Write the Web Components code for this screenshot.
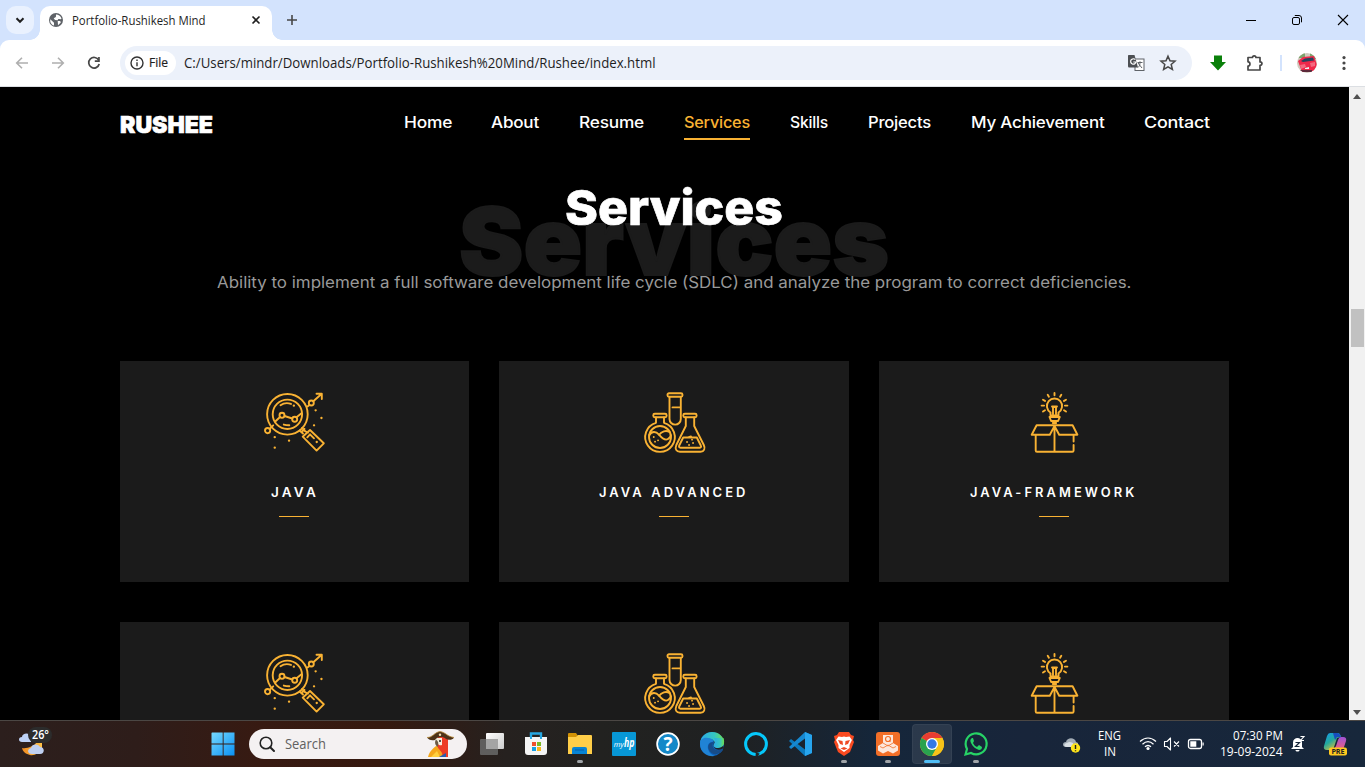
<!DOCTYPE html>
<html lang="en">
<head>
<meta charset="utf-8">
<title>Portfolio-Rushikesh Mind</title>
<style>
html,body{margin:0;height:100%;overflow:hidden;background:#000}
body{font-family:Inter,"Open Sans",sans-serif}
</style>
</head>
<body>
<desktop-screen></desktop-screen>
<script>
const define=(name,html,init)=>customElements.define(name,class extends HTMLElement{
  constructor(){super();this.attachShadow({mode:'open'}).innerHTML=typeof html==='function'?html(this):html}
  connectedCallback(){if(init)init(this)}
});

/* A line of text stretched or condensed to the width given in "w". */
define('fit-text','<style>:host{display:block;white-space:nowrap;flex:none}span{display:inline-block;transform-origin:0 50%}</style><span><slot></slot></span>',el=>{
  const w=+el.getAttribute('w'),s=el.shadowRoot.querySelector('span');
  el.style.width=w+'px';
  const n=s.getBoundingClientRect().width;
  if(n)s.style.transform='scaleX('+w/n+')';
});

const G='fill="none" stroke="#f9b233" stroke-width="1.9" stroke-linecap="round" stroke-linejoin="round"';
const ICONS={
chev:[16,16,'<path d="M4.5 6.3 8 9.8l3.5-3.5" fill="none" stroke="#1f1f1f" stroke-width="2"/>'],
globe:[16,16,'<circle cx="8" cy="8" r="7" fill="#5f6368"/><path d="M2.3 7.2 6 10.7v2.8c-2.6-.6-4.2-3.300-3.700-6.300zM8 2.400c2.200 0 4.700 1.500 5.500 4-.2.900-1.200.900-2 .6-.9-.3-1.700.3-1.700 1.200l-2.800-.1-1.300-1.800 2.200-1.300zM9.700 9h2.500l.6 1.500-2.800 2.700z" fill="#fff"/>'],
close:[12,12,'<path d="m2.500 2.500 7 7m0-7-7 7" stroke="#1f1f1f" stroke-width="1.6"/>'],
plus:[14,14,'<path d="M7 2v10M2 7h10" stroke="#474747" stroke-width="1.600"/>'],
min:[12,12,'<path d="M1 6.500h10" stroke="#000"/>'],
restore:[12,12,'<rect x="1.500" y="3.500" width="7" height="7" rx="1.500" fill="none" stroke="#000"/><path d="M3.800 1.500H8a2.500 2.500 0 0 1 2.500 2.500v4.300" fill="none" stroke="#000"/>'],
x:[12,12,'<path d="m1 1 10 10m0-10L1 11" stroke="#000" stroke-width="1.100"/>'],
back:[16,16,'<path d="M14 8H3m5-5.300L2.700 8 8 13.300" fill="none" stroke="#afafaf" stroke-width="1.600"/>'],
fwd:[16,16,'<path d="M2 8h11M8 2.700 13.300 8 8 13.300" fill="none" stroke="#afafaf" stroke-width="1.600"/>'],
reload:[16,16,'<path d="M12.700 5.200A5.300 5.300 0 1 0 13.200 9" fill="none" stroke="#474747" stroke-width="1.700"/><path d="M13.800 2v5h-5V5.300h3.300V2z" fill="#474747"/>'],
info:[14,14,'<circle cx="7" cy="7" r="6" fill="none" stroke="#333" stroke-width="1.400"/><path d="M7 6.200v4M7 3.600v1.400" stroke="#333" stroke-width="1.400"/>'],
translate:[18,18,'<rect x="8" y="5" width="9" height="11.500" fill="#fff" stroke="#5f6368"/><path d="M2 1h5.500l3.500 12.500H2.500C1.500 13.500 1 13 1 12V2c0-.6.4-1 1-1z" fill="#4c4f53"/><path d="M8.300 5.600A2.700 2.700 0 1 0 9 8H6.300" fill="none" stroke="#fff" stroke-width="1.200"/><path d="M10.500 8.500h5M13 7.300v1.200c0 3-1 4-2 5m0-4.500 4 5" fill="none" stroke="#5f6368"/>'],
star:[18,18,'<path d="m9 2.200 2 4.600 5 .4-3.800 3.300 1.200 4.900L9 12.800l-4.400 2.600 1.200-4.900L2 7.200l5-.4z" fill="none" stroke="#474747" stroke-width="1.500"/>'],
down:[18,18,'<path d="M5 1.500h8V8h4l-8 8.500L1 8h4z" fill="#0a800a"/>'],
puzzle:[18,18,'<path d="M2 3.500h4.500c0-2.200 3.400-2.200 3.400 0H14v4.400c2.600 0 2.600 3.400 0 3.400V16H2v-4c2.600-.2 2.600-4 0-4.200z" fill="none" stroke="#474747" stroke-width="1.700" stroke-linejoin="round"/>'],
avatar:[20,20,'<defs><clipPath id="c"><circle cx="10" cy="10" r="10"/></clipPath></defs><g clip-path="url(#c)"><path fill="#cfc8bc" d="M0 0h20v20H0z"/><path fill="#7ca36d" d="M0 0h8v5H0zM13 0h7v6h-7z"/><path fill="#f0284a" d="m1 8 5-4 11-1 3 9-3 6-12 1z"/><path fill="#28425d" d="m4 8 4-2.500 8-1 1 3-11 1.500z"/><path fill="#f46a80" d="m3 12 5-1 1 3-5 2zM13 10l5-1v4l-4 1z"/><path fill="#5c2a3b" d="M2 17h13v2H4z"/><path fill="#eee" d="m8 15 4-1v2H8z"/></g>'],
dots:[16,16,'<g fill="#474747"><circle cx="8" cy="2.600" r="1.600"/><circle cx="8" cy="8" r="1.600"/><circle cx="8" cy="13.400" r="1.600"/></g>'],
lens:[62,62,`<g ${G}><circle cx="23.400" cy="22.300" r="20.300"/><circle cx="23.400" cy="22.300" r="14.700"/><path d="M43.500 14.500 45.500 13M49.300 9.200 57.500 2M52.500 1.800h5.300v5.200M5.700 36.800l3.500-3.500M38 36l3 3M35.500 38.500l3.500 3M37.500 39.800l3-3M46 38 59.800 51.300 52.600 58.600 38.700 44.700zM39.500 38.500l4.500 2M43.300 45.300 46 42.300l4 4M11.500 29.300 16 25M20.500 24l7.800 2.500M32.500 25.300l5-4M16.500 13.300c3-2.200 7-2.700 10.500-1.400M19.800 32.600c2 .7 3.500.7 5.500.7"/><circle cx="47.300" cy="11" r="2.500"/><circle cx="3.600" cy="38.600" r="2.600"/><circle cx="18" cy="23.300" r="2.500"/><circle cx="30.700" cy="27.300" r="2.500"/></g><path d="M51.600 18.300h.1M57.400 26h.1M50 33.300h.1M10.700 45.200h.1M25 48.700h.1M10.700 55.700h.1M52.700 50h.1M29.800 13.700h.1" stroke="#f9b233" stroke-width="2.300" stroke-linecap="round"/>`],
flasks:[62,62,`<g ${G}><rect x="23.500" y="1.200" width="15" height="3.600" rx="1.500"/><path d="M25.500 5v22a5.600 5.600 0 0 0 11.300 0V5M28.500 15.400h8"/><rect x="9.300" y="21.700" width="13.300" height="3.600" rx="1.500"/><path d="M12 25.500v5.300a14.800 14.800 0 1 0 8 0v-5.300"/><circle cx="16" cy="45" r="11"/><path d="M5.300 43c2.500-4 6.500-4 9.700-.4 3 3.600 6 6.400 9 4.400 1.500-1 2.500-2.300 2.900-3.500M15 43c2.500-3.700 7-5 10.500-3"/><rect x="39.300" y="21.700" width="13.300" height="3.600" rx="1.500"/><path d="M41.800 25.500v8.500l-9.500 19c-1.600 4 0 6.800 3.700 6.800h20.500c3.700 0 5-3.300 3.300-6.800l-9.600-19v-8.500"/><path d="m39.200 45.500-4 8c-.5 1.300 0 2.200 1.300 2.200h19.300c1.300 0 1.600-1.200 1-2.200l-4-8zM44 45.500l3-1"/></g><path d="M9.700 45h.1M11 49.700h.1M14 48.300h.1M43 50h.1M49 51h.1M45 53h.1M48 47.700h.1" stroke="#f9b233" stroke-width="1.800" stroke-linecap="round"/>`],
box:[62,62,`<g ${G}><path d="M26.500 20.500a7.600 7.600 0 1 1 8 0v3h-8zM25.500 25h10.300l-1.700 4h-7zM28.800 31h3.400M29 22v-7h3v7M28 14.500h5M30.500 1v2.300M23.700 2.800l1.200 2M37.300 2.800l-1.200 2M19 7.700l2 1.200M42 7.700l-2 1.200M17.600 13.600h2.500M40.900 13.600h2.500M19 19.500l2-1.200M42 19.500l-2-1.200M12.600 33.300h36l4.800 9.400H35.200L30.500 34l-4.700 8.700H7.700zM11.700 43v15.500c0 .8.500 1.300 1.300 1.300h35.300c.9 0 1.300-.5 1.300-1.300V53M49.600 43v6.500M30.500 34v25.500"/></g>`],
weather:[32,30,'<defs><linearGradient id="m"><stop stop-color="#f08a20"/><stop offset="1" stop-color="#ffc347"/></linearGradient></defs><path d="M3 18c5 1 12-2 14-5h6v5c-2 5-8 8-12 7-4-1-7-3-8-7z" fill="url(#m)"/><path d="M3 12c-4 0-4-5 0-5 0-4 8-5 9 0v5z" fill="#bdd1f6"/><path d="M13 24c-5 0-5-5-1-6 1-5 8-4 9-1 5 0 5 7 0 7z" fill="#bfd0f1"/>'],
win:[24,24,'<defs><linearGradient id="w" x2="1" y2="1"><stop stop-color="#76d9ff"/><stop offset="1" stop-color="#0a91f4"/></linearGradient></defs><path d="M1 .5h10.700v11H.5V1zM12.600.5h10.900v11H12.600zM.5 12.500h11.200v11H.5zM12.600 12.500h10.900v11H12.600z" fill="url(#w)"/>'],
search:[18,18,'<circle cx="8" cy="8" r="5.800" fill="none" stroke="#222" stroke-width="1.600"/><path d="m12.200 12.200 3.800 3.800" stroke="#222" stroke-width="2" stroke-linecap="round"/>'],
parrot:[30,28,'<path d="M2 27c2-7 6-9 8-11l6 1 5 10z" fill="#f5a71b"/><path d="M11 8c3-3 9-3 11 1v18h-6c2-6-4-6-5-12z" fill="#ed3c25"/><path d="m5 27 6-6 3 6z" fill="#ffd03d"/><path d="m13 27 7-4v4z" fill="#285fae"/><path d="M10 8h6v7c-3 1-6-1-6-7z" fill="#f5eedc"/><path d="M10 9.500c-2 3-.5 6 1.500 7.500 1.500-3 1-6-1.500-7.500z" fill="#6b5a45"/><circle cx="14" cy="11" r="1" fill="#222"/><path d="M1 7.500c6 0 7-5 13-6 6 1 7 5 14 6-2 3.300-6 2.500-8 1.500-3-3-9-2.500-11 1-4 1-6.500-.5-8-2.500z" fill="#4c3218"/><path d="M1 7.500c6 0 7-5 13-6 6 1 7 5 14 6" fill="none" stroke="#b88a37" stroke-width=".8"/><circle cx="14" cy="4.800" r="1.200" fill="#f0dfaf"/>'],
task:[26,24,'<defs><linearGradient id="t" x2="1" y2="1"><stop stop-color="#fff"/><stop offset="1" stop-color="#ccc"/></linearGradient></defs><rect x="7" y="1" width="18" height="16" rx="1" fill="url(#t)"/><rect x="1" y="7" width="18" height="16" rx="1" fill="#666" opacity=".88"/><path d="M7 7h12v10H7z" fill="#a4a4a4"/>'],
store:[24,24,'<path d="M7 7V1.500h10V7" fill="none" stroke="#27a7e1" stroke-width="2.400"/><path d="M1 5h22v15q0 3-3 3H4q-3 0-3-3z" fill="#f5f5f5"/><path d="M7 5v2m10-2v2" stroke="#27a7e1" stroke-width="2"/><path fill="#ee4e2e" d="M8 10h4v4H8z"/><path fill="#7ab927" d="M13 10h4v4h-4z"/><path fill="#159ee5" d="M8 15h4v4H8z"/><path fill="#f9b71b" d="M13 15h4v4h-4z"/>'],
folder:[26,24,'<path d="M1 2q0-1 1-1h7l2 3v5H1z" fill="#d29205"/><path d="M1 5h8l2-2h13q1 0 1 1v18H1z" fill="#ffce48"/><path d="M5 22v-5q0-2 2-2h11q2 0 2 2v5z" fill="#0784d4"/><path d="M8 18h9" stroke="#075ea8"/>'],
myhp:[24,24,'<rect width="24" height="24" rx="1" fill="#0797d6"/><text x="1.700" y="15" font-family="Open Sans" font-style="italic" font-size="8" fill="#fff" textLength="10" lengthAdjust="spacingAndGlyphs">my</text><text x="12" y="15" font-family="Open Sans" font-weight="700" font-style="italic" font-size="12" fill="#fff" textLength="10.500" lengthAdjust="spacingAndGlyphs">hp</text>'],
help:[24,24,'<circle cx="12" cy="12" r="10.900" fill="#1488c8" stroke="#fff" stroke-width="1.700"/><text x="12" y="18.800" text-anchor="middle" font-family="Open Sans" font-weight="700" font-size="19" fill="#fff">?</text>'],
edge:[24,24,'<defs><linearGradient id="e"><stop stop-color="#2caae7"/><stop offset=".6" stop-color="#35c6c1"/><stop offset="1" stop-color="#70df4d"/></linearGradient></defs><circle cx="12" cy="12" r="12" fill="#0c62bd"/><path d="M0 11C1 4 6 0 12 0c7 0 12 5 12 10 0 4-3 6-6 6-4 0-5-2-4-4 1-3-1-5-4-5C5 6 1 8 0 11z" fill="url(#e)"/><path d="M0 12c0-5 4-7 8-6 3 0 5 1 6 4-4-1-7 2-6 7 1 4 4 6 7 7C7 25 0 20 0 12z" fill="#2083d5"/><path d="M13.500 10c-2 3-1 7 3 8 3 .6 5-.5 6-1l.5 1c-3 5-11 6-14 0-2-4 0-8 4.500-8z" fill="#174c88"/><path d="M13.500 12c1-2 0-3-1-3.500L24 15l-1 1.500c-6 3-10 0-9.500-4.500z" fill="#202226"/><path d="M14 6h9.500c2 6-1 10-5.500 10-4 0-5-2-4-4 1-2 1-4 0-6z" fill="url(#e)"/>'],
alexa:[24,24,'<circle cx="12" cy="12" r="10.400" fill="none" stroke="#05c8fb" stroke-width="3"/><path d="m11.500 25 .3-5 4 1.800-3 3.200z" fill="#222426"/>'],
code:[24,24,'<path d="m17 0 7 3v18l-7 3L1 9l2-2 14 10.500z" fill="#0c79bc"/><path d="m17 0 7 3v18l-7 3z" fill="#27a5ee"/><path d="M17 0v6.500L3 17l-2-2z" fill="#1688d0"/>'],
brave:[24,24,'<path d="M7 0h10l2 3 3 1-1 4 1 2-4 10-6 4-6-4L2 10l1-2-1-4 3-1z" fill="#fa4a20"/><path d="m6.500 4.500 3.500.5 2-.5 2 .5 3.500-.5L20 8l-2.500 5v3L12 20l-5.500-4v-3L4 8z" fill="#fff"/><path d="m6 8 4.500 1 .5 4-3-1zM18 8l-4.500 1-.5 4 3-1zM8.500 16.500l3.500-1.500 3.500 1.500L12 18z" fill="#f04a25"/>'],
qube:[24,24,'<rect width="24" height="24" rx="3" fill="#f26f28"/><path d="M7 3h10v8l-5 3-5-3zM2 14l5-3 5 3v5l-5 2.500-5-3zM12 14l5-3 5 3v4.500l-5 3-5-2.500z" fill="#fce8dd"/><circle cx="12" cy="7" r="2.500" fill="none" stroke="#f26f28" stroke-width="1.200"/><path d="m13 8 1.500 1.700M4 14.500l3 1.500 5-3 5 3 3-1.500M7 11l5 3 5-3" fill="none" stroke="#f26f28" stroke-width=".8"/>'],
chrome:[24,24,'<circle cx="12" cy="12" r="12" fill="#f8c318"/><path d="M12 12 1.600 6A12 12 0 0 1 22.400 6z" fill="#e83c32"/><path d="M1.600 6A12 12 0 0 0 12 24l5-9-5-3z" fill="#29a24f"/><path d="M12 6h10.400A12 12 0 0 1 12 24l5.200-9z" fill="#f8c318"/><circle cx="12" cy="12" r="6" fill="#fff"/><circle cx="12" cy="12" r="4.700" fill="#3478e5"/>'],
whats:[24,24,'<path d="M1.500 22.500 3 17A10.500 10.500 0 1 1 7 21z" fill="none" stroke="#27d366" stroke-width="2.200"/><path d="M8 6C6 7 6 9 7 11c2 4 5 6 8 7 2 0 3-1 3-3l-3-2-2 2c-2-1-3-2-4-4l1-2-1-3z" fill="#27d366"/>'],
cloud:[20,18,'<path d="M4 12C0 12 0 7 4 7c1-5 9-5 10 0l2 1v4z" fill="#a3adb6"/><path d="M5 12c-4 0-3-4 0-4 3-2 5 0 6 0v4z" fill="#d9dfe4"/><circle cx="13.500" cy="13" r="4.700" fill="#ffe51a"/><path d="M13.500 10v4m0 1.200v1" stroke="#222" stroke-width="1.400"/>'],
wifi:[18,16,'<g fill="none" stroke="#fff" stroke-width="1.300"><path d="M1 5.500c5-4.500 11-4.500 16 0M3.500 8.200c3.500-3.200 7.500-3.200 11 0M6 10.800c2-1.800 4-1.800 6 0"/></g><circle cx="9" cy="12.500" r="1.600" fill="#fff"/>'],
mute:[18,16,'<path d="M1.500 5.500H4L7.500 2v12L4 10.500H1.500zM11 5.500l5 5m0-5-5 5" fill="none" stroke="#fff" stroke-width="1.100" stroke-linejoin="round"/>'],
battery:[18,16,'<rect x="1.500" y="3.500" width="13" height="9" rx="2" fill="none" stroke="#fff" stroke-width="1.300"/><path d="M3.300 5.300h6v5.400h-6zM15.500 6.500h1.200v3h-1.200z" fill="#fff"/>'],
bell:[16,18,'<path d="M3 12V7.500c0-6 9-6 9 0V12l2 2H1zM5.500 15h4c0 2-4 2-4 0z" fill="#fff"/><path d="M5.500 7.500h4l-4 4h4" fill="none" stroke="#17263a" stroke-width="1.200"/><path d="M10.500 1.500H14l-3.500 4H14" fill="none" stroke="#fff" stroke-width="1.100"/>'],
copilot:[26,26,'<defs><linearGradient id="p" x2=".7" y2="1"><stop stop-color="#1599f2"/><stop offset=".5" stop-color="#23a99d"/><stop offset="1" stop-color="#f2c52d"/></linearGradient><linearGradient id="q" x2="0" y2="1"><stop stop-color="#a052d7"/><stop offset="1" stop-color="#ef6278"/></linearGradient></defs><path d="M7 2h8q2 0 3 4l-4 1-3 9q-1 3-4 3H4q-4 0-3-4L4 5q1-3 3-3z" fill="url(#p)"/><path d="M18 6h2q4 0 3 4l-3 9H9q3-1 4-4l2-6q1-3 3-3z" fill="url(#q)"/><path d="M14 2q3 0 4 4h-4l-2 3-2-7z" fill="#174dbe"/><rect x="6" y="16.500" width="18" height="8" rx="2" fill="#ffc91f"/><text x="8.500" y="23.100" font-family="Open Sans" font-weight="700" font-size="7.200" fill="#222" textLength="13">PRE</text>']
};
define('ui-icon',el=>{
  const [w,h,p]=ICONS[el.getAttribute('name')];
  return `<style>:host{display:block;flex:none;width:${w}px;height:${h}px}svg{display:block;overflow:visible}</style><svg width="${w}" height="${h}" viewBox="0 0 ${w} ${h}">${p}</svg>`;
});
/* Centres its content in a cell of the given width. */
define('icon-cell','<style>:host{display:flex;align-items:center;justify-content:center;flex:none}</style><slot></slot>',el=>{el.style.width=el.getAttribute('w')+'px'});
const ic=(n,w)=>`<icon-cell w="${w}"><ui-icon name="${n}"></ui-icon></icon-cell>`;

define('tab-strip',`<style>
:host{display:flex;height:40px;background:#d3e3fd;font:12px/28px "Open Sans",sans-serif;color:#1f1f1f;align-items:center;flex:none}
.list{width:28px;height:28px;border-radius:10px;background:#e9f1fe;margin-left:6px;display:grid;place-items:center}
.tab{margin:6px 0 0 6px;width:232px;height:34px;background:#fff;border-radius:10px 10px 0 0;display:flex;align-items:center;position:relative;box-sizing:border-box;padding:0 10px 6px 8px}
.tab:before,.tab:after{content:"";position:absolute;bottom:0;width:10px;height:10px}
.tab:before{left:-10px;background:radial-gradient(circle at 0 0,transparent 9.500px,#fff 10px)}
.tab:after{right:-10px;background:radial-gradient(circle at 100% 0,transparent 9.500px,#fff 10px)}
fit-text{margin:1px 0 0 8px}.tab ui-icon:last-child{margin-left:auto}
.new{margin-left:13px}.sp{flex:1}
</style><div class="list"><ui-icon name="chev"></ui-icon></div>
<div class="tab"><ui-icon name="globe"></ui-icon><fit-text w="133.500">Portfolio-Rushikesh Mind</fit-text><ui-icon name="close"></ui-icon></div>
<ui-icon class="new" name="plus"></ui-icon><div class="sp"></div>${ic('min',46)}${ic('restore',46)}${ic('x',45)}`);

define('address-bar',`<style>
:host{display:block;background:#d3e3fd;flex:none}
.bar{height:46px;border-bottom:1px solid #dcdfe3;background:#fff;border-radius:9px 9px 0 0;display:flex;align-items:center;padding-left:4px;font:14px/24px "Open Sans",sans-serif;color:#1f1f1f}
.omni{width:1072px;height:34px;border-radius:17px;background:#ecf1fa;display:flex;align-items:center;margin-left:8px;box-sizing:border-box;padding:0 8px 0 5px}
.chip{height:24px;width:51px;border-radius:12px;background:#fff;display:flex;align-items:center;font-size:12px;font-weight:500;gap:5px;padding-left:5px;box-sizing:border-box;-webkit-text-stroke:.2px}
.url{margin-left:8px}.sp{flex:1}.div{width:2px;height:16px;background:#d3e3fd;margin:0 7px}
</style><div class="bar">${ic('back',36)}${ic('fwd',36)}${ic('reload',36)}
<div class="omni"><div class="chip"><ui-icon name="info"></ui-icon><fit-text w="19">File</fit-text></div>
<fit-text class="url" w="471.500">C:/Users/mindr/Downloads/Portfolio-Rushikesh%20Mind/Rushee/index.html</fit-text><div class="sp"></div>${ic('translate',32)}${ic('star',32)}</div>
<icon-cell w="8"></icon-cell>${ic('down',36)}${ic('puzzle',37)}<div class="div"></div>${ic('avatar',36)}${ic('dots',38)}</div>`);

define('nav-item','<style>:host{display:block;height:34px;color:#fff;border-bottom:2px solid transparent;box-sizing:border-box;font:500 15.500px/34px Inter}:host([active]){color:#f9b233;border-color:#f9b233}</style><slot></slot>');
const NAV=[['Home',48.1],['About',48],['Resume',65],['Services',66],['Skills',38],['Projects',63],['My Achievement',133.5],['Contact',66]];
define('site-nav',`<style>:host{display:flex;justify-content:space-between;padding:19px 19px 0 0;height:34px}
.brand{font:900 23.300px/37px Inter;color:#fff;-webkit-text-stroke:.6px #fff}nav{display:flex;gap:39.850px;letter-spacing:-.2px}</style>
<fit-text class="brand" w="93">RUSHEE</fit-text><nav>${NAV.map(([t,w])=>`<nav-item${t=='Services'?' active':''}><fit-text w="${w}">${t}</fit-text></nav-item>`).join('')}</nav>`);

define('section-title',`<style>:host{display:block;position:relative;margin-top:38px;height:138px;color:#fff}
.main{position:relative;margin:0 auto;left:-.5px;font:800 48.500px/60px Inter;-webkit-text-stroke:.7px #fff}.ghost{position:absolute;left:339px;top:3px;font:900 93.500px/120px Inter;color:#1b1b1b;-webkit-text-stroke:2px #1b1b1b}
.sub{position:relative;margin:30px auto 0;font:400 15.800px/30px Inter;color:#999}</style>
<fit-text class="ghost" w="430">Services</fit-text><fit-text class="main" w="218">Services</fit-text>
<fit-text class="sub" w="914.500">Ability to implement a full software development life cycle (SDLC) and analyze the program to correct deficiencies.</fit-text>`);

define('service-card',`<style>:host{display:flex;flex-direction:column;align-items:center;background:#1b1b1b;height:221px;box-sizing:border-box;padding-top:31px}
::slotted(ui-icon){margin-left:1.500px}
.t{font:600 12.600px/20px Inter;letter-spacing:3px;color:#fff;margin-top:29px;height:20px}i{width:30px;height:1px;background:#f9b233;margin:13px .5px 0 0}</style>
<slot name="icon"></slot><div class="t"><slot></slot></div><i></i>`);
const CARDS=[['lens','JAVA',48],['flasks','JAVA ADVANCED',149.5],['box','JAVA-FRAMEWORK',167.5]];
const card=([i,t,w])=>`<service-card><ui-icon slot="icon" name="${i}"></ui-icon><fit-text w="${w}">${t}</fit-text></service-card>`;
define('site-page',`<style>:host{display:block;background:#000;flex:1;overflow:hidden;padding:0 120px;min-width:0}
.grid{display:grid;grid-template-columns:349px 350px 350px;gap:40px 30px;margin-top:45px}</style>
<site-nav></site-nav><section-title></section-title><div class="grid">${CARDS.map(card).join('')}${CARDS.map(card).join('')}</div>`);

define('scroll-bar',`<style>:host{display:flex;flex-direction:column;align-items:center;width:16px;background:#f1f1f1;flex:none;padding:7px 0 5px;box-sizing:border-box}
i{width:13px;height:38px;background:#c1c1c1;margin-top:210px}b{border:4px solid transparent}.u{border-bottom:5px solid #505050;border-top:0}.d{border-top:5px solid #505050;border-bottom:0;margin-top:auto}</style><b class="u"></b><i></i><b class="d"></b>`);

define('task-app',el=>`<style>:host{display:flex;flex-direction:column;align-items:center;width:44px;height:47px;flex:none}
div{width:40px;height:40px;margin-top:3px;border-radius:4px;display:grid;place-items:center;box-sizing:border-box}:host([active]) div{background:#ffffff17;box-shadow:inset 0 0 0 1px #ffffff0c}
i{width:6px;height:3px;border-radius:2px;margin-top:-4px}:host([open]) i{background:#a0a4a8}:host([active]) i{width:16px;background:#50bdf5}</style><div><ui-icon name="${el.getAttribute('name')}"></ui-icon></div><i></i>`);
define('task-bar',`<style>:host{display:flex;align-items:center;height:46px;flex:none;border-top:1px solid #4b4744;background:linear-gradient(90deg,#2c1f1d 0,#2e1d1a 10%,#371a12 19%,#36190f 28%,#26211f 37%,#222220 44%,#1f2122 54%,#15263a 64%,#18253a 75%,#17273b);color:#fff;font:12px/16px "Open Sans",sans-serif}
.weather{width:32px;height:30px;margin:2px 158px 0 19px;position:relative}.badge{position:absolute;left:9px;top:-3px;width:24px;height:16px;border-radius:8px;background:#2c2c2c;display:grid;place-items:center}.badge fit-text{line-height:16px;font-weight:600}
.search{width:218px;height:30px;border-radius:15px;background:#f4f1f2;margin:0 3px 0 14px;display:flex;align-items:center;box-sizing:border-box;padding:0 11px 0 9px;color:#606060;font-size:14px}.search fit-text{margin-left:9px}.search ui-icon:last-child{margin-left:auto}
.start{margin-left:2px}.gap{flex:1}.lang,.time{display:flex;flex-direction:column}.lang{align-items:center;width:39px;margin-right:1px}.time{align-items:flex-end;width:71px;margin-left:3.500px}</style>
<div class="weather"><ui-icon name="weather"></ui-icon><span class="badge"><fit-text w="17">26°</fit-text></span></div>
<ui-icon class="start" name="win"></ui-icon>
<div class="search"><ui-icon name="search"></ui-icon><fit-text w="41">Search</fit-text><ui-icon name="parrot"></ui-icon></div>
<task-app name="task"></task-app><task-app name="store"></task-app><task-app name="folder" open></task-app><task-app name="myhp"></task-app><task-app name="help"></task-app><task-app name="edge"></task-app><task-app name="alexa"></task-app><task-app name="code"></task-app><task-app name="brave" open></task-app><task-app name="qube" open></task-app><task-app name="chrome" open active></task-app><task-app name="whats" open></task-app>
<div class="gap"></div>${ic('cloud',36)}<div class="lang"><fit-text w="23">ENG</fit-text><fit-text w="12">IN</fit-text></div><icon-cell w="6"></icon-cell>${ic('wifi',24)}${ic('mute',24)}${ic('battery',24)}
<div class="time"><fit-text w="50">07:30 PM</fit-text><fit-text w="62.500">19-09-2024</fit-text></div><icon-cell w="7"></icon-cell>${ic('bell',17)}<icon-cell w="16"></icon-cell>${ic('copilot',26)}<icon-cell w="16.500"></icon-cell>`);

define('desktop-screen',`<style>:host{display:flex;flex-direction:column;width:1365px;height:767px;overflow:hidden}main{display:flex;flex:1;min-height:0}</style><tab-strip></tab-strip><address-bar></address-bar><main><site-page></site-page><scroll-bar></scroll-bar></main><task-bar></task-bar>`);
</script>
</body>
</html>
